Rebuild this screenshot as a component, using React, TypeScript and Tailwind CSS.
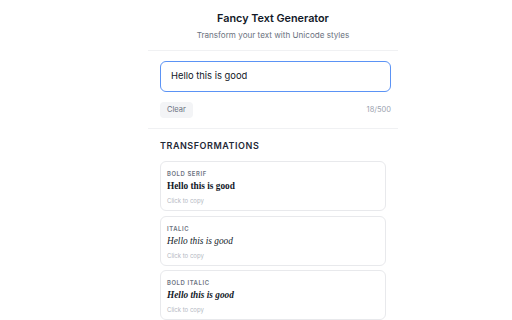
import React from "react";

const items = [
  { label: "BOLD SERIF", text: "Hello this is good", cls: "font-bold" },
  { label: "ITALIC", text: "Hello this is good", cls: "italic" },
  { label: "BOLD ITALIC", text: "Hello this is good", cls: "font-bold italic" },
];

export default function App() {
  return (
    <div className="w-[512px] h-[320px] overflow-hidden bg-white flex justify-center pl-[34px] font-['Inter',sans-serif]">
      <div className="w-[250px] flex flex-col">
        <div className="flex flex-col items-center pt-[12px] pb-[9px] border-b border-[#f0f1f3]">
          <h1 className="text-[10.8px] leading-[14px] font-semibold text-[#111827]">Fancy Text Generator</h1>
          <p className="mt-[4px] text-[8.1px] leading-[11px] text-[#6b7280]">Transform your text with Unicode styles</p>
        </div>
        <div className="pl-[12px] pr-[7px] pt-[10px] pb-[10px] border-b border-[#f0f1f3]">
          <div className="h-[31px] rounded-[6px] border-[1.5px] border-[#5b93f5] flex items-center px-[10px] text-[9.4px] text-[#111827]">
            Hello this is good
          </div>
          <div className="mt-[10px] flex items-center justify-between">
            <button className="h-[16px] px-[7px] rounded-[4px] bg-[#f3f4f6] text-[7.5px] text-[#6b7280]">Clear</button>
            <span className="text-[7.5px] text-[#9ca3af]">18/500</span>
          </div>
        </div>
        <div className="pl-[12px] pr-[12px] pt-[10px]">
          <h2 className="text-[9px] leading-[14px] font-semibold tracking-[0.06em] text-[#1f2937]">TRANSFORMATIONS</h2>
          <div className="mt-[8px] flex flex-col gap-[4.5px]">
            {items.map((it) => (
              <div key={it.label} className="h-[50px] rounded-[6px] border border-[#e8e9ec] px-[6px] pt-[7px]">
                <div className="text-[5.9px] leading-[9px] font-semibold tracking-[0.1em] text-[#6b7280]">{it.label}</div>
                <div className={`mt-[1px] text-[9.3px] leading-[14px] text-[#111827] font-['Liberation_Serif',serif] ${it.cls}`}>{it.text}</div>
                <div className="mt-[4px] text-[6px] leading-[8px] text-[#b4b8bf]">Click to copy</div>
              </div>
            ))}
          </div>
        </div>
      </div>
    </div>
  );
}
